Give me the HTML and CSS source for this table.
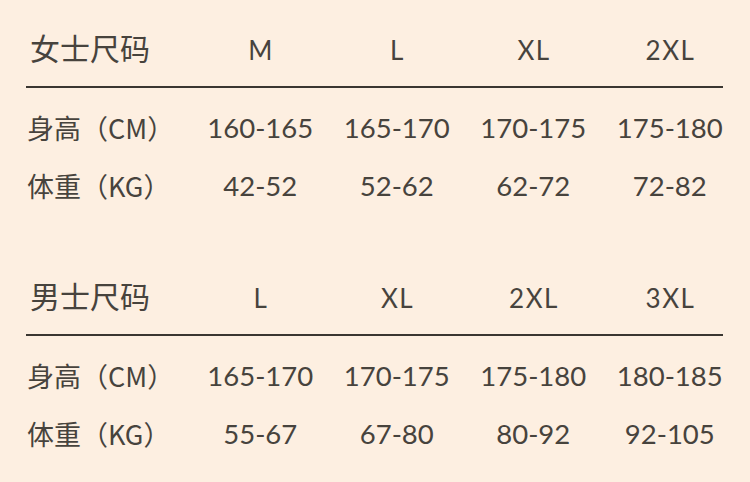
FILE: index.html
```html
<!DOCTYPE html>
<html lang="zh">
<head>
<meta charset="utf-8">
<link rel="stylesheet" href="styles.css">
</head>
<body>
<div class="page">
  <section class="size-table">
    <div class="row head">
      <div class="label title">女士尺码</div>
      <div class="cell">M</div>
      <div class="cell">L</div>
      <div class="cell">XL</div>
      <div class="cell">2XL</div>
    </div>
    <div class="rule"></div>
    <div class="row data first">
      <div class="label">身高（CM）</div>
      <div class="cell">160-165</div>
      <div class="cell">165-170</div>
      <div class="cell">170-175</div>
      <div class="cell">175-180</div>
    </div>
    <div class="row data">
      <div class="label">体重（KG）</div>
      <div class="cell">42-52</div>
      <div class="cell">52-62</div>
      <div class="cell">62-72</div>
      <div class="cell">72-82</div>
    </div>
  </section>
  <section class="size-table">
    <div class="row head">
      <div class="label title">男士尺码</div>
      <div class="cell">L</div>
      <div class="cell">XL</div>
      <div class="cell">2XL</div>
      <div class="cell">3XL</div>
    </div>
    <div class="rule"></div>
    <div class="row data first">
      <div class="label">身高（CM）</div>
      <div class="cell">165-170</div>
      <div class="cell">170-175</div>
      <div class="cell">175-180</div>
      <div class="cell">180-185</div>
    </div>
    <div class="row data">
      <div class="label">体重（KG）</div>
      <div class="cell">55-67</div>
      <div class="cell">67-80</div>
      <div class="cell">80-92</div>
      <div class="cell">92-105</div>
    </div>
  </section>
</div>
</body>
</html>
```
FILE: styles.css
```css
html, body {
  margin: 0;
  padding: 0;
  background: #fdefe1;
}
body {
  width: 750px;
  height: 482px;
  overflow: hidden;
  font-family: Lato, "Noto Sans CJK SC", sans-serif;
  color: #47433d;
}
.page {
  padding-left: 26px;
}
.size-table {
  height: 248px;
  padding-top: 20px;
  box-sizing: border-box;
}
.row {
  display: grid;
  grid-template-columns: 166px repeat(4, 136.5px);
  align-items: center;
}
.head {
  height: 60px;
  font-size: 26px;
}
.head .cell {
  letter-spacing: 1.5px;
  text-indent: 1.5px;
}
.data {
  height: 58px;
  font-size: 27.5px;
}
.data.first {
  margin-top: 10px;
}
.label {
  white-space: nowrap;
  font-family: "Noto Sans CJK SC", sans-serif;
  font-size: 27px;
  padding-left: 1px;
}
.title {
  font-size: 30px;
  padding-left: 4px;
  margin-top: -6px;
}
.cell {
  text-align: center;
  white-space: nowrap;
}
.rule {
  width: 697px;
  height: 2px;
  margin-top: 6px;
  background: #3a3631;
}
```
